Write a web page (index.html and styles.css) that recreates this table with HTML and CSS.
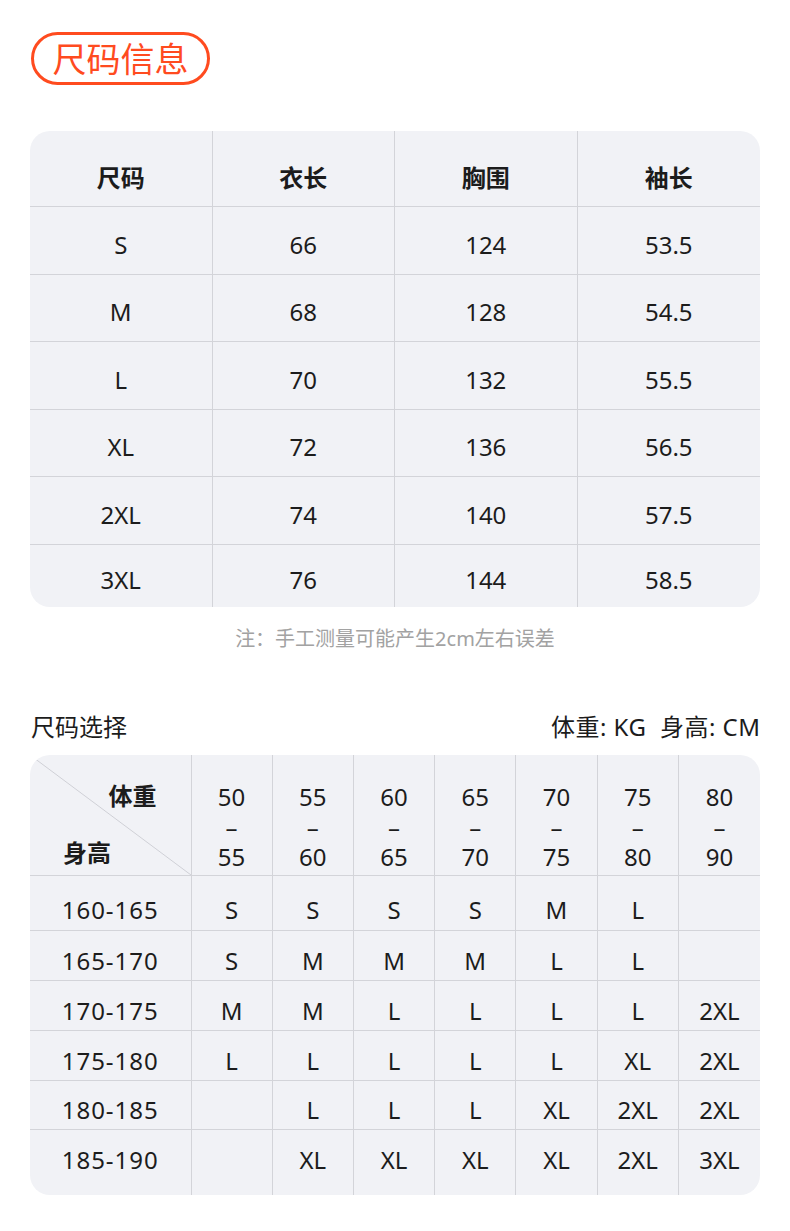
FILE: index.html
```html
<!DOCTYPE html>
<html lang="zh-CN">
<head>
<meta charset="utf-8">
<title>尺码信息</title>
<link rel="stylesheet" href="styles.css">
</head>
<body>
<div class="page">
  <div class="badge">尺码信息</div>

  <div class="size-table">
    <div class="cell head">尺码</div>
    <div class="cell head">衣长</div>
    <div class="cell head">胸围</div>
    <div class="cell head last-col">袖长</div>

    <div class="cell">S</div><div class="cell">66</div><div class="cell">124</div><div class="cell last-col">53.5</div>
    <div class="cell">M</div><div class="cell">68</div><div class="cell">128</div><div class="cell last-col">54.5</div>
    <div class="cell">L</div><div class="cell">70</div><div class="cell">132</div><div class="cell last-col">55.5</div>
    <div class="cell">XL</div><div class="cell">72</div><div class="cell">136</div><div class="cell last-col">56.5</div>
    <div class="cell">2XL</div><div class="cell">74</div><div class="cell">140</div><div class="cell last-col">57.5</div>
    <div class="cell last-row">3XL</div><div class="cell last-row">76</div><div class="cell last-row">144</div><div class="cell last-row last-col">58.5</div>
  </div>

  <p class="note">注：手工测量可能产生2cm左右误差</p>

  <div class="pick-head">
    <span>尺码选择</span>
    <span class="units">体重: KG&nbsp; 身高: CM</span>
  </div>

  <div class="pick-table">
    <div class="pc corner">
      <span class="corner-w">体重</span>
      <span class="corner-h">身高</span>
    </div>
    <div class="pc wh"><span>50</span><span>–</span><span>55</span></div>
    <div class="pc wh"><span>55</span><span>–</span><span>60</span></div>
    <div class="pc wh"><span>60</span><span>–</span><span>65</span></div>
    <div class="pc wh"><span>65</span><span>–</span><span>70</span></div>
    <div class="pc wh"><span>70</span><span>–</span><span>75</span></div>
    <div class="pc wh"><span>75</span><span>–</span><span>80</span></div>
    <div class="pc wh lc"><span>80</span><span>–</span><span>90</span></div>

    <div class="pc r1 hgt">160-165</div><div class="pc r1">S</div><div class="pc r1">S</div><div class="pc r1">S</div><div class="pc r1">S</div><div class="pc r1">M</div><div class="pc r1">L</div><div class="pc r1 lc"></div>
    <div class="pc hgt">165-170</div><div class="pc">S</div><div class="pc">M</div><div class="pc">M</div><div class="pc">M</div><div class="pc">L</div><div class="pc">L</div><div class="pc lc"></div>
    <div class="pc hgt">170-175</div><div class="pc">M</div><div class="pc">M</div><div class="pc">L</div><div class="pc">L</div><div class="pc">L</div><div class="pc">L</div><div class="pc lc">2XL</div>
    <div class="pc hgt">175-180</div><div class="pc">L</div><div class="pc">L</div><div class="pc">L</div><div class="pc">L</div><div class="pc">L</div><div class="pc">XL</div><div class="pc lc">2XL</div>
    <div class="pc hgt">180-185</div><div class="pc"></div><div class="pc">L</div><div class="pc">L</div><div class="pc">L</div><div class="pc">XL</div><div class="pc">2XL</div><div class="pc lc">2XL</div>
    <div class="pc lr hgt">185-190</div><div class="pc lr"></div><div class="pc lr">XL</div><div class="pc lr">XL</div><div class="pc lr">XL</div><div class="pc lr">XL</div><div class="pc lr">2XL</div><div class="pc lr lc">3XL</div>
  </div>
</div>
</body>
</html>
```

FILE: styles.css
```css
* { box-sizing: border-box; }

html, body {
  margin: 0;
  padding: 0;
  background: #ffffff;
}

body {
  font-family: "Noto Sans", "Noto Sans CJK SC", sans-serif;
  color: #1c1c1c;
}

.page {
  width: 790px;
  padding: 32px 30px 0 30px;
}

.badge {
  display: inline-flex;
  align-items: center;
  justify-content: center;
  height: 53px;
  width: 179px;
  margin-left: 1px;
  border: 3px solid #ff4b1f;
  border-radius: 27px;
  color: #ff4b1f;
  font-size: 34px;
  line-height: 1;
  padding-top: 1px;
}

/* size table */
.size-table {
  margin-top: 46px;
  width: 730px;
  display: grid;
  grid-template-columns: repeat(4, 1fr);
  grid-template-rows: 76px 68px 67px 68px 67px 68px 62px;
  background: #f1f2f6;
  border-radius: 20px;
  overflow: hidden;
}

.cell {
  display: flex;
  align-items: center;
  justify-content: center;
  font-size: 24px;
  line-height: 30px;
  padding-top: 8px;
  border-right: 1px solid #d3d4d9;
  border-bottom: 1px solid #d3d4d9;
}

.cell.head {
  font-weight: 700;
  padding-top: 18px;
}

.cell.last-col { border-right: none; }
.cell.last-row { border-bottom: none; }

.note {
  margin: 18px 0 0 0;
  text-align: center;
  font-size: 20px;
  line-height: 28px;
  color: #a2a2a2;
}

.pick-head {
  margin-top: 59px;
  display: flex;
  justify-content: space-between;
  font-size: 24px;
  line-height: 30px;
  padding-left: 1px;
}

.units {
  letter-spacing: 0.5px;
  margin-right: -0.5px;
}

.pick-table {
  margin-top: 13px;
  width: 730px;
  display: grid;
  grid-template-columns: 161.5px repeat(7, 1fr);
  grid-template-rows: 121px 55px 50px 50px 50px 49px 65px;
  background: #f1f2f6;
  border-radius: 20px;
  overflow: hidden;
}

.pc {
  display: flex;
  align-items: center;
  justify-content: center;
  font-size: 24px;
  line-height: 30px;
  padding-top: 10px;
  border-right: 1px solid #d3d4d9;
  border-bottom: 1px solid #d3d4d9;
}

.pc.hgt { letter-spacing: 1px; }
.pc.r1 { padding-top: 14px; }
.pc.lc { border-right: none; }
.pc.lr { border-bottom: none; padding-top: 0; padding-bottom: 5px; }

.pc.wh {
  flex-direction: column;
  padding-top: 23px;
}

.pc.wh span { display: block; line-height: 30px; }

.pc.corner {
  flex-direction: column;
  align-items: stretch;
  justify-content: flex-start;
  padding: 26px 34px 0 33px;
  font-weight: 700;
  background: linear-gradient(to top right, transparent calc(50% - 0.8px), #cfd0d6 50%, transparent calc(50% + 0.8px));
}

.corner-w { align-self: flex-end; line-height: 30px; }
.corner-h { align-self: flex-start; line-height: 30px; margin-top: 27px; }
```
